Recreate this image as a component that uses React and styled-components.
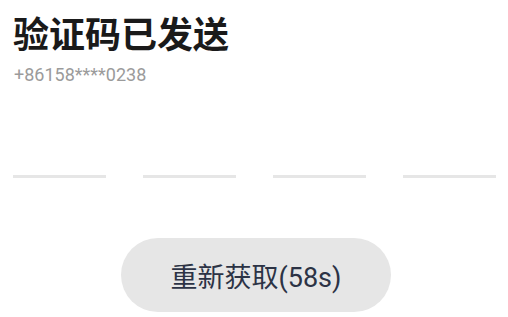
import React from "react";
import styled, { createGlobalStyle } from "styled-components";

const Global = createGlobalStyle`
  html, body { margin: 0; padding: 0; background: #fff; }
  body { font-family: Roboto, "Noto Sans CJK SC", sans-serif; }
`;

const Page = styled.div`
  width: 508px;
  height: 317px;
  box-sizing: border-box;
  padding: 11px 12px 0 13px;
  display: flex;
  flex-direction: column;
  overflow: hidden;
`;

const Title = styled.h1`
  margin: 0;
  font-family: Roboto, "Noto Sans CJK SC", sans-serif;
  font-size: 36px;
  font-weight: 700;
  line-height: 50px;
  color: #1a1a1a;
`;

const Phone = styled.div`
  margin-top: 2px;
  padding-left: 1px;
  font-size: 18px;
  line-height: 24px;
  color: #9b9b9b;
`;

const CodeRow = styled.div`
  display: flex;
  justify-content: space-between;
  margin-top: 88px;
`;

const CodeCell = styled.div`
  width: 93px;
  height: 3px;
  background: #e6e6e6;
`;

const Resend = styled.button`
  align-self: center;
  margin-top: 60px;
  margin-left: 3px;
  width: 270px;
  height: 74px;
  border: none;
  border-radius: 37px;
  background: #e6e6e6;
  color: #2c3345;
  font-family: Roboto, "Noto Sans CJK SC", sans-serif;
  font-size: 27px;
  padding: 0;
`;

export default function App() {
  return (
    <>
      <Global />
      <Page>
        <Title>验证码已发送</Title>
        <Phone>+86158****0238</Phone>
        <CodeRow>
          {[0, 1, 2, 3].map((i) => (
            <CodeCell key={i} />
          ))}
        </CodeRow>
        <Resend>重新获取(58s)</Resend>
      </Page>
    </>
  );
}
